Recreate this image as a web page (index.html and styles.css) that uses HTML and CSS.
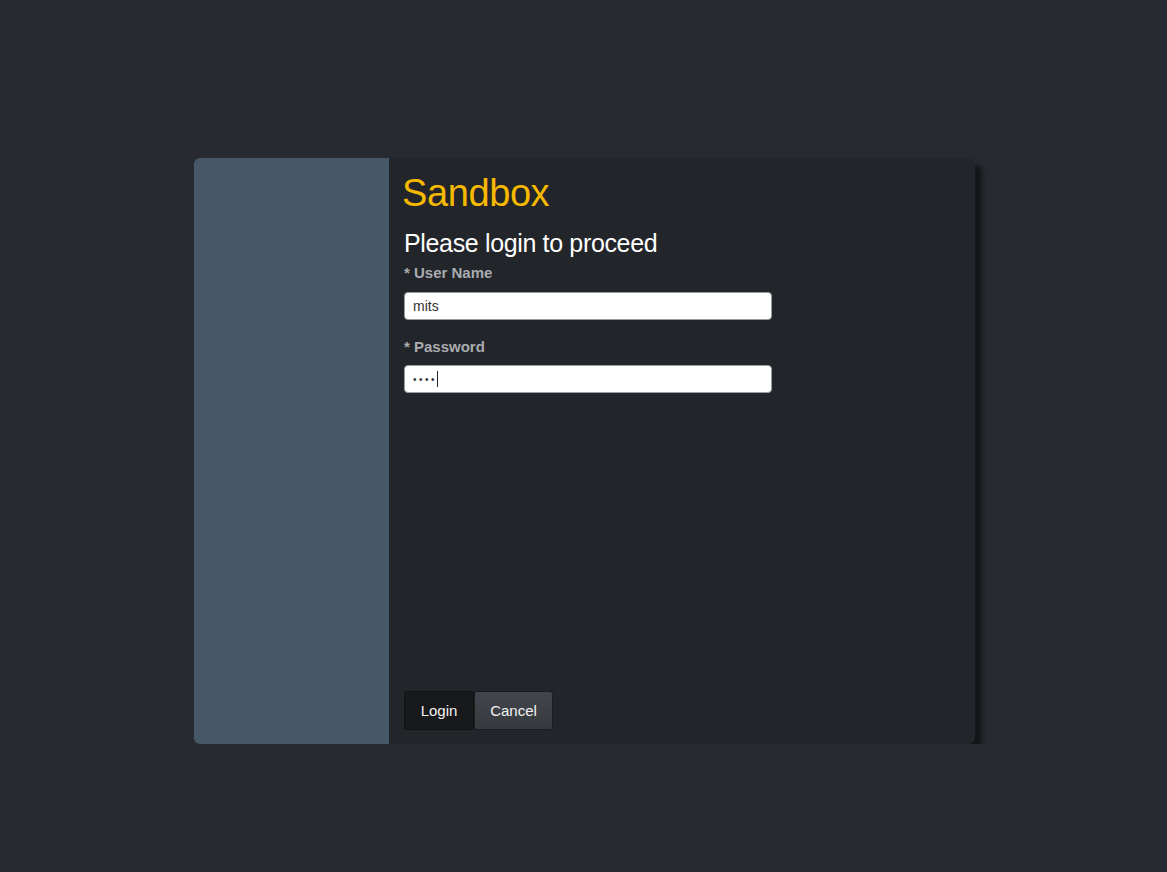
FILE: index.html
```html
<!DOCTYPE html>
<html>
<head>
<meta charset="utf-8">
<link rel="stylesheet" href="styles.css">
</head>
<body>
<div class="card">
  <aside class="side"></aside>
  <main class="main">
    <h1 class="brand">Sandbox</h1>
    <h2 class="prompt">Please login to proceed</h2>
    <form class="form">
      <label class="label">* User Name</label>
      <input class="field" type="text" value="mits">
      <label class="label label-2">* Password</label>
      <div class="pw">
        <input class="field" type="password" value="abcd">
        <span class="caret"></span>
      </div>
    </form>
    <div class="actions">
      <button class="btn btn-login" type="button">Login</button>
      <button class="btn btn-cancel" type="button">Cancel</button>
    </div>
  </main>
</div>
</body>
</html>
```

FILE: styles.css
```css
html, body {
  margin: 0;
  padding: 0;
  background: #272a30;
  font-family: "Liberation Sans", Arial, sans-serif;
}
body {
  padding-top: 158px;
}
.card {
  width: 781px;
  height: 586px;
  margin: 0 0 0 194px;
  display: flex;
  border-radius: 6px;
  overflow: hidden;
  box-shadow: 7px 7px 5px rgba(0, 0, 0, 0.5);
  background: #222529;
}
.side {
  width: 195px;
  background: #465767;
  flex: none;
}
.main {
  flex: 1;
  display: flex;
  flex-direction: column;
  padding: 0 0 14px 14px;
}
.brand {
  margin: 13px 0 0 -1px;
  font-size: 38px;
  font-weight: normal;
  line-height: 44px;
  color: #f7b900;
  letter-spacing: -0.4px;
}
.prompt {
  margin: 13px 0 0 1px;
  font-size: 25px;
  font-weight: normal;
  line-height: 30px;
  color: #ffffff;
  letter-spacing: -0.35px;
}
.form {
  display: flex;
  flex-direction: column;
  width: 368px;
  margin-left: 1px;
}
.label {
  font-size: 15px;
  font-weight: bold;
  color: #a9acb0;
  line-height: 18px;
  margin-top: 6px;
  margin-bottom: 10px;
}
.label-2 {
  margin-top: 18px;
  margin-bottom: 9px;
}
.pw {
  position: relative;
  height: 28px;
}
.caret {
  position: absolute;
  left: 33px;
  top: 6px;
  width: 1px;
  height: 16px;
  background: #222;
}
.field {
  box-sizing: border-box;
  height: 28px;
  width: 368px;
  border: 1px solid #9a9da1;
  border-radius: 4px;
  background: #ffffff;
  padding: 0 8px;
  font-family: "Liberation Sans", Arial, sans-serif;
  font-size: 14px;
  color: #333;
  outline: none;
}
.pw .field {
  font-size: 10px;
  letter-spacing: 2.5px;
}
.actions {
  margin-top: auto;
  margin-left: 1px;
  display: flex;
}
.btn {
  height: 39px;
  font-family: "Liberation Sans", Arial, sans-serif;
  font-size: 15px;
  color: #f2f2f2;
  border-radius: 3px;
  padding: 0 15px;
  cursor: pointer;
}
.btn-login {
  width: 70px;
  background: #17191b;
  border: 1px solid #101112;
}
.btn-cancel {
  width: 79px;
  background: linear-gradient(#42464c, #36393e);
  border: 1px solid #1b1d20;
}
```
